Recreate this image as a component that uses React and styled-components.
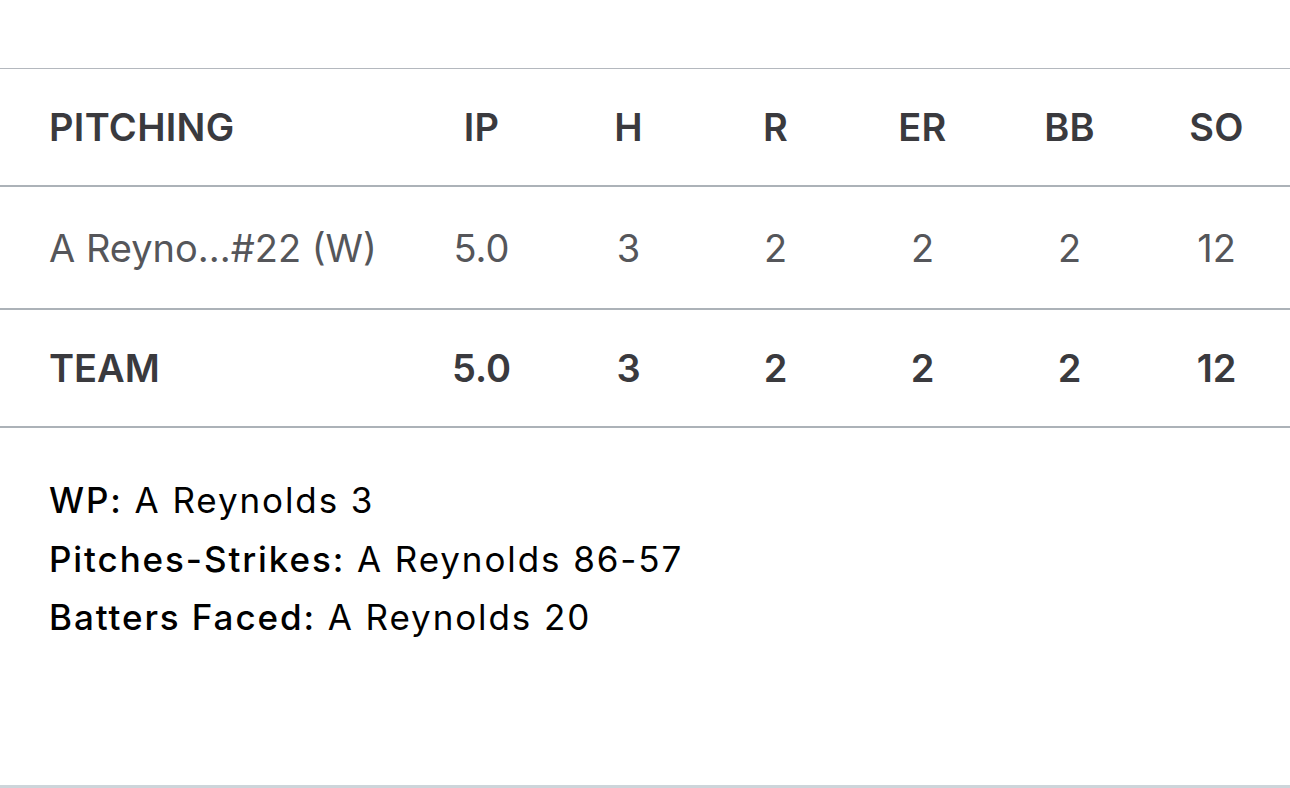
import React from 'react';
import styled, { createGlobalStyle } from 'styled-components';

const GlobalStyle = createGlobalStyle`
  html, body {
    margin: 0;
    padding: 0;
    background: #ffffff;
  }
  body {
    font-family: "Inter", "Noto Sans", sans-serif;
  }
`;

const Page = styled.div`
  width: 1290px;
  height: 788px;
  display: flex;
  flex-direction: column;
  padding-top: 68px;
  box-sizing: border-box;
  overflow: hidden;
`;

const Table = styled.div`
  border-top: 1px solid #b4b8be;
`;

const Row = styled.div`
  display: grid;
  grid-template-columns: 1fr repeat(6, 147px);
  align-items: center;
  padding-left: 49px;
  height: ${({ h }) => h}px;
  border-bottom: 2px solid #acb2b8;
  color: ${({ head, total }) => (head || total ? '#3a3a3e' : '#55565a')};
  font-size: 38px;
  font-weight: ${({ head, total }) => (head || total ? 600 : 400)};
  letter-spacing: ${({ head }) => (head ? '0.3px' : '0')};
`;

const Name = styled.div`
  white-space: nowrap;
`;

const Stat = styled.div`
  text-align: center;
`;

const Notes = styled.div`
  flex: 1;
  padding: 43px 0 0 49px;
  font-size: 35px;
  line-height: 58.5px;
  letter-spacing: 1.9px;
  color: #000;
  border-bottom: 3px solid #cdd5da;
`;

const Line = styled.div`
  white-space: nowrap;
`;

const Label = styled.span`
  font-weight: 500;
`;

const cols = ['IP', 'H', 'R', 'ER', 'BB', 'SO'];
const pitcher = ['5.0', '3', '2', '2', '2', '12'];

export default function App() {
  return (
    <>
      <GlobalStyle />
      <Page>
        <Table>
          <Row head h={116}>
            <Name>PITCHING</Name>
            {cols.map((c) => (
              <Stat key={c}>{c}</Stat>
            ))}
          </Row>
          <Row h={121}>
            <Name>A Reyno...#22 (W)</Name>
            {pitcher.map((v, i) => (
              <Stat key={i}>{v}</Stat>
            ))}
          </Row>
          <Row total h={116}>
            <Name>TEAM</Name>
            {pitcher.map((v, i) => (
              <Stat key={i}>{v}</Stat>
            ))}
          </Row>
        </Table>
        <Notes>
          <Line><Label>WP:</Label> A Reynolds 3</Line>
          <Line><Label>Pitches-Strikes:</Label> A Reynolds 86-57</Line>
          <Line><Label>Batters Faced:</Label> A Reynolds 20</Line>
        </Notes>
      </Page>
    </>
  );
}
